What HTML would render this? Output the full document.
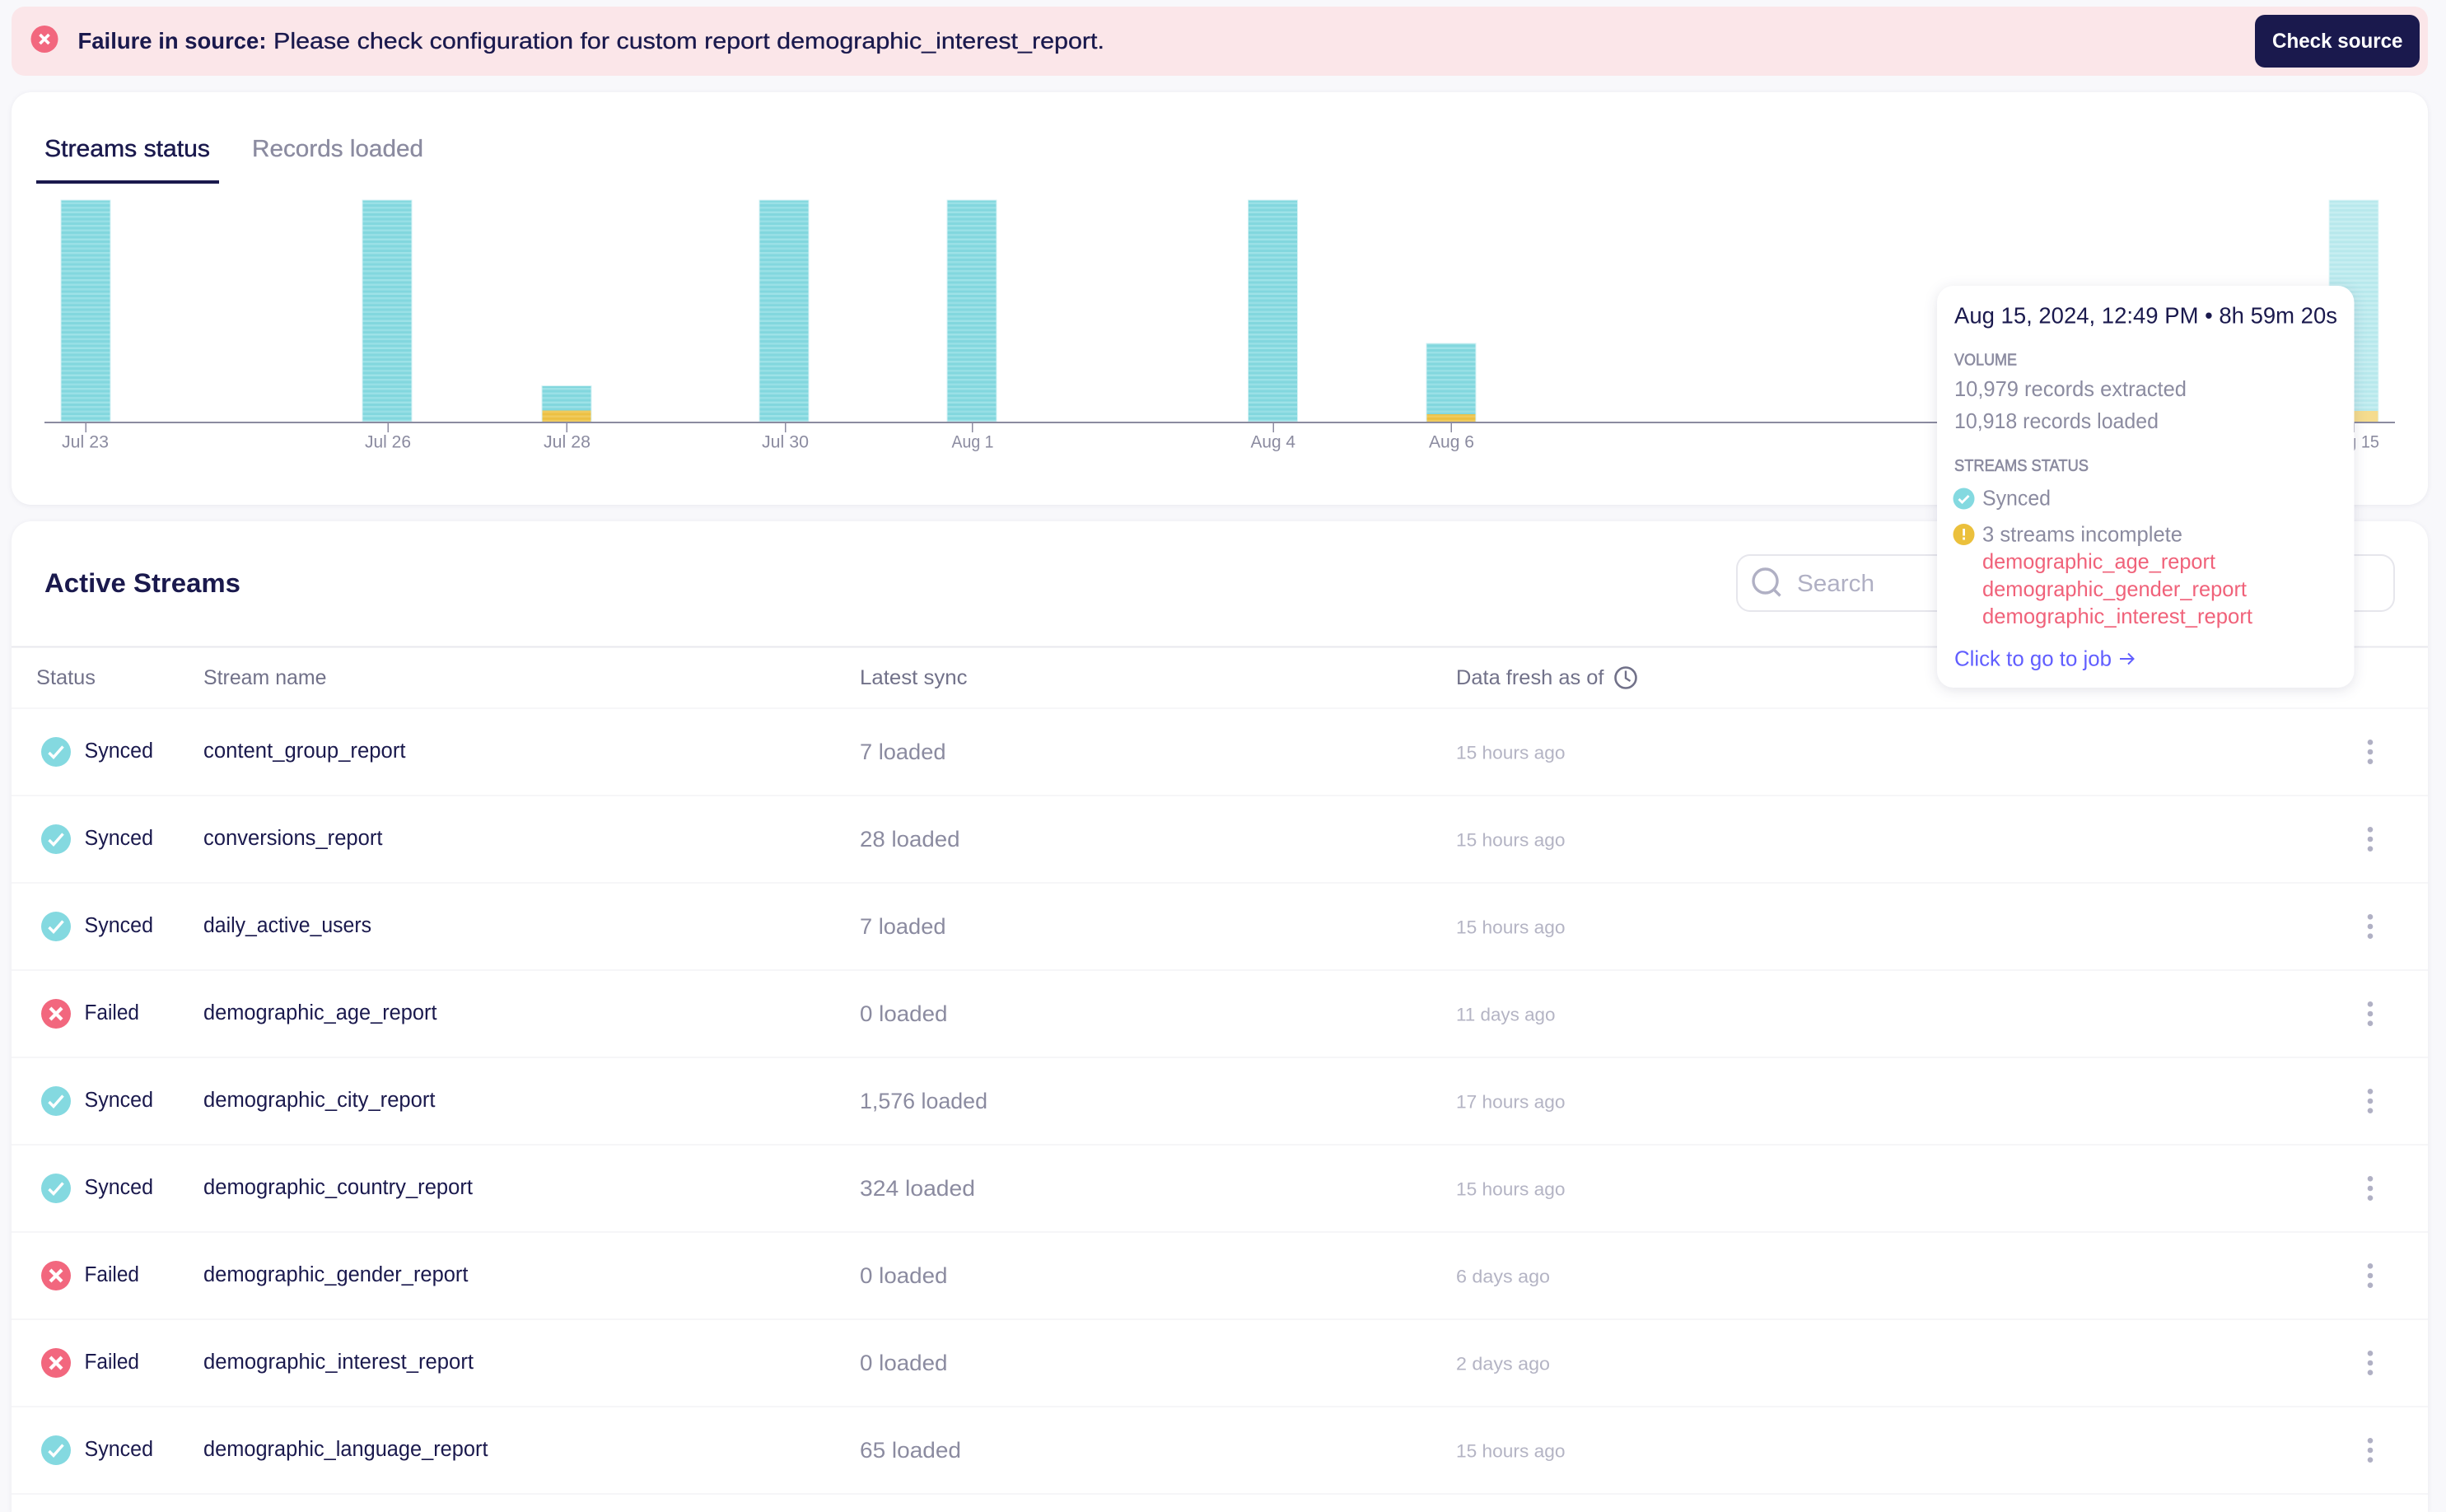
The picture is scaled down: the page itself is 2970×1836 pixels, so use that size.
<!DOCTYPE html>
<html lang="en"><head><meta charset="utf-8"><title>Streams status</title>
<style>
html,body{margin:0;padding:0;background:#f8f8fb;width:2970px;height:1836px;overflow:hidden}
svg{display:block}
text{font-family:"Liberation Sans",sans-serif;white-space:pre}
.n{font-size:25.5px;fill:#1a194d}
.h{font-size:25px;fill:#717189}
.l{font-size:26.5px;fill:#8b8ba0}
.f{font-size:22.5px;fill:#b4b4c4}
.t{font-size:21.5px;fill:#8b8ba0;text-anchor:start}
.tt{font-size:26px;fill:#8b8ba0}
.r{font-size:26px;fill:#f0627a}
.cap{font-size:20px;fill:#8b8ba0;stroke:#8b8ba0;stroke-width:.6}
</style></head><body>
<svg xmlns="http://www.w3.org/2000/svg" width="2970" height="1836" viewBox="0 0 2970 1836">
<defs>
<pattern id="st" width="10" height="16.5" patternUnits="userSpaceOnUse" y="243">
<rect width="10" height="16.5" fill="#82d7de"/><rect y="2.5" width="10" height="2.5" fill="#9ae0e6"/><rect y="8" width="10" height="2.7" fill="#97dfe5"/><rect y="13.5" width="10" height="2.5" fill="#9ee2e7"/></pattern>
<pattern id="sl" width="10" height="5.5" patternUnits="userSpaceOnUse" y="243"><rect width="10" height="5.5" fill="#b7e8ec"/><rect y="2.8" width="10" height="2.7" fill="#c6eef1"/></pattern>
<pattern id="sy" width="10" height="5.5" patternUnits="userSpaceOnUse" y="243"><rect width="10" height="5.5" fill="#ecc043"/><rect y="2.8" width="10" height="2.7" fill="#f0ca5c"/></pattern>
<g id="ok"><circle r="18" fill="#84d9e0"/><path d="M-8.5 1L-3 6.5L8.5-6.5" fill="none" stroke="#fff" stroke-width="3.4"/></g>
<g id="no"><circle r="18" fill="#f2677e"/><path d="M-7-7L7 7M7-7L-7 7" fill="none" stroke="#fff" stroke-width="4.2"/></g>
<g id="dots" fill="#b0b0c4"><circle cy="-11.7" r="3.3"/><circle r="3.3"/><circle cy="11.7" r="3.3"/></g>
</defs>
<rect width="2970" height="1836" fill="#f8f8fb"/>

<!-- banner -->
<rect x="14" y="8" width="2934" height="84" rx="16" fill="#fbe6e9"/>
<circle cx="54" cy="47.5" r="16.5" fill="#f2677e"/>
<path d="M48.5 42L59.5 53M59.5 42L48.5 53" stroke="#fff" stroke-width="3.6" fill="none"/>
<text x="94.5" y="59" font-size="28" font-weight="700" fill="#1a194d" textLength="229" lengthAdjust="spacingAndGlyphs">Failure in source:</text>
<text x="332" y="59" font-size="28" fill="#1a194d" stroke="#1a194d" stroke-width=".3" textLength="1009" lengthAdjust="spacingAndGlyphs">Please check configuration for custom report demographic_interest_report.</text>
<rect x="2738" y="18" width="200" height="64" rx="12" fill="#1a194d"/>
<text x="2759" y="58" font-size="25" font-weight="700" fill="#fff" textLength="158.5" lengthAdjust="spacingAndGlyphs">Check source</text>

<!-- card 1 -->
<g style="filter:drop-shadow(0 1px 3px rgba(26,25,77,.07))"><rect x="14" y="112" width="2934" height="501" rx="24" fill="#fff"/></g>
<text x="54" y="190" font-size="28.5" fill="#1a194d" stroke="#1a194d" stroke-width=".45" textLength="201" lengthAdjust="spacingAndGlyphs">Streams status</text>
<text x="306" y="190" font-size="28.5" fill="#8b8ba0" stroke="#8b8ba0" stroke-width=".3" textLength="208" lengthAdjust="spacingAndGlyphs">Records loaded</text>
<rect x="44" y="219" width="222" height="4" fill="#1a194d"/>

<!-- bars -->
<g stroke="#d5f2f4" stroke-width="1">
<rect x="74" y="243" width="60" height="269" fill="url(#st)"/>
<rect x="440" y="243" width="60" height="269" fill="url(#st)"/>
<rect x="658" y="468.5" width="60" height="43.5" fill="url(#st)"/>
<rect x="922" y="243" width="60" height="269" fill="url(#st)"/>
<rect x="1150" y="243" width="60" height="269" fill="url(#st)"/>
<rect x="1515.5" y="243" width="60" height="269" fill="url(#st)"/>
<rect x="1732" y="417" width="60" height="95" fill="url(#st)"/>
<rect x="2828" y="243" width="60" height="269" fill="url(#sl)" stroke="#e4f7f8"/>
</g>
<rect x="658.5" y="498.5" width="59" height="13.5" fill="url(#sy)"/>
<rect x="1732.5" y="503" width="59" height="9" fill="url(#sy)"/>
<rect x="2828.5" y="499" width="59" height="13" fill="#f5dc8e"/>
<rect x="54" y="512" width="2854" height="2" fill="#8b8ba0"/>
<g fill="#8b8ba0">
<rect x="103.5" y="513" width="1.5" height="12"/><rect x="470.5" y="513" width="1.5" height="12"/><rect x="687.5" y="513" width="1.5" height="12"/><rect x="953" y="513" width="1.5" height="12"/><rect x="1180" y="513" width="1.5" height="12"/><rect x="1545.5" y="513" width="1.5" height="12"/><rect x="1761.5" y="513" width="1.5" height="12"/><rect x="2857.5" y="513" width="1.5" height="12"/>
</g>
<g>
<text class="t" x="75" y="543.5" textLength="57" lengthAdjust="spacingAndGlyphs">Jul 23</text>
<text class="t" x="443" y="543.5" textLength="56" lengthAdjust="spacingAndGlyphs">Jul 26</text>
<text class="t" x="660" y="543.5" textLength="57" lengthAdjust="spacingAndGlyphs">Jul 28</text>
<text class="t" x="925" y="543.5" textLength="57" lengthAdjust="spacingAndGlyphs">Jul 30</text>
<text class="t" x="1155.5" y="543.5" textLength="51" lengthAdjust="spacingAndGlyphs">Aug 1</text>
<text class="t" x="1518.5" y="543.5" textLength="54.5" lengthAdjust="spacingAndGlyphs">Aug 4</text>
<text class="t" x="1735" y="543.5" textLength="55" lengthAdjust="spacingAndGlyphs">Aug 6</text>
<text class="t" x="2826" y="543.5" textLength="63" lengthAdjust="spacingAndGlyphs">Aug 15</text>
</g>

<!-- card 2 -->
<g style="filter:drop-shadow(0 1px 3px rgba(26,25,77,.07))"><path d="M14 1836V657a24 24 0 0 1 24-24H2924a24 24 0 0 1 24 24V1836Z" fill="#fff"/></g>
<text x="54" y="719" font-size="32.5" font-weight="700" fill="#1a194d" textLength="238" lengthAdjust="spacingAndGlyphs">Active Streams</text>
<rect x="2109" y="674" width="798" height="68" rx="16" fill="#fff" stroke="#e6e6ec" stroke-width="2"/>
<circle cx="2143.5" cy="705.5" r="14.5" fill="none" stroke="#b0b0c4" stroke-width="3.4"/>
<path d="M2154 716L2161.5 723.5" stroke="#b0b0c4" stroke-width="3.4" fill="none"/>
<text x="2182" y="718" font-size="28.5" fill="#b0b0c4" textLength="94" lengthAdjust="spacingAndGlyphs">Search</text>
<rect x="14" y="784.5" width="2934" height="2" fill="#e8e8ee"/>
<text class="h" x="44" y="831" textLength="72" lengthAdjust="spacingAndGlyphs">Status</text>
<text class="h" x="247" y="831" textLength="149.5" lengthAdjust="spacingAndGlyphs">Stream name</text>
<text class="h" x="1044" y="831" textLength="130.5" lengthAdjust="spacingAndGlyphs">Latest sync</text>
<text class="h" x="1768" y="831" textLength="179.5" lengthAdjust="spacingAndGlyphs">Data fresh as of</text>
<circle cx="1974" cy="823" r="12.5" fill="none" stroke="#717189" stroke-width="2.6"/>
<path d="M1974 814.5V823.5L1979.5 827" fill="none" stroke="#717189" stroke-width="2.4"/>
<g fill="#f6f6f8">
<rect x="14" y="859" width="2934" height="2"/><rect x="14" y="965" width="2934" height="2"/><rect x="14" y="1071" width="2934" height="2"/><rect x="14" y="1177" width="2934" height="2"/><rect x="14" y="1283" width="2934" height="2"/><rect x="14" y="1389" width="2934" height="2"/><rect x="14" y="1495" width="2934" height="2"/><rect x="14" y="1601" width="2934" height="2"/><rect x="14" y="1707" width="2934" height="2"/><rect x="14" y="1813" width="2934" height="2"/>
</g>

<!-- rows -->
<use href="#ok" x="68" y="913"/><text class="n" x="102.5" y="920" textLength="83.5" lengthAdjust="spacingAndGlyphs">Synced</text><text class="n" x="247" y="920" textLength="245.5" lengthAdjust="spacingAndGlyphs">content_group_report</text><text class="l" x="1044" y="922" textLength="104.5" lengthAdjust="spacingAndGlyphs">7 loaded</text><text class="f" x="1768" y="921.5" textLength="132.5" lengthAdjust="spacingAndGlyphs">15 hours ago</text><use href="#dots" x="2878" y="913"/>

<use href="#ok" x="68" y="1019"/><text class="n" x="102.5" y="1026" textLength="83.5" lengthAdjust="spacingAndGlyphs">Synced</text><text class="n" x="247" y="1026" textLength="217.5" lengthAdjust="spacingAndGlyphs">conversions_report</text><text class="l" x="1044" y="1028" textLength="121.5" lengthAdjust="spacingAndGlyphs">28 loaded</text><text class="f" x="1768" y="1027.5" textLength="132.5" lengthAdjust="spacingAndGlyphs">15 hours ago</text><use href="#dots" x="2878" y="1019"/>

<use href="#ok" x="68" y="1125"/><text class="n" x="102.5" y="1132" textLength="83.5" lengthAdjust="spacingAndGlyphs">Synced</text><text class="n" x="247" y="1132" textLength="204" lengthAdjust="spacingAndGlyphs">daily_active_users</text><text class="l" x="1044" y="1134" textLength="104.5" lengthAdjust="spacingAndGlyphs">7 loaded</text><text class="f" x="1768" y="1133.5" textLength="132.5" lengthAdjust="spacingAndGlyphs">15 hours ago</text><use href="#dots" x="2878" y="1125"/>

<use href="#no" x="68" y="1231"/><text class="n" x="102.5" y="1238" textLength="66.5" lengthAdjust="spacingAndGlyphs">Failed</text><text class="n" x="247" y="1238" textLength="283.5" lengthAdjust="spacingAndGlyphs">demographic_age_report</text><text class="l" x="1044" y="1240" textLength="106.5" lengthAdjust="spacingAndGlyphs">0 loaded</text><text class="f" x="1768" y="1239.5" textLength="120.5" lengthAdjust="spacingAndGlyphs">11 days ago</text><use href="#dots" x="2878" y="1231"/>

<use href="#ok" x="68" y="1337"/><text class="n" x="102.5" y="1344" textLength="83.5" lengthAdjust="spacingAndGlyphs">Synced</text><text class="n" x="247" y="1344" textLength="281.5" lengthAdjust="spacingAndGlyphs">demographic_city_report</text><text class="l" x="1044" y="1346" textLength="155" lengthAdjust="spacingAndGlyphs">1,576 loaded</text><text class="f" x="1768" y="1345.5" textLength="132.5" lengthAdjust="spacingAndGlyphs">17 hours ago</text><use href="#dots" x="2878" y="1337"/>

<use href="#ok" x="68" y="1443"/><text class="n" x="102.5" y="1450" textLength="83.5" lengthAdjust="spacingAndGlyphs">Synced</text><text class="n" x="247" y="1450" textLength="327" lengthAdjust="spacingAndGlyphs">demographic_country_report</text><text class="l" x="1044" y="1452" textLength="140" lengthAdjust="spacingAndGlyphs">324 loaded</text><text class="f" x="1768" y="1451.5" textLength="132.5" lengthAdjust="spacingAndGlyphs">15 hours ago</text><use href="#dots" x="2878" y="1443"/>

<use href="#no" x="68" y="1549"/><text class="n" x="102.5" y="1556" textLength="66.5" lengthAdjust="spacingAndGlyphs">Failed</text><text class="n" x="247" y="1556" textLength="321.5" lengthAdjust="spacingAndGlyphs">demographic_gender_report</text><text class="l" x="1044" y="1558" textLength="106.5" lengthAdjust="spacingAndGlyphs">0 loaded</text><text class="f" x="1768" y="1557.5" textLength="114" lengthAdjust="spacingAndGlyphs">6 days ago</text><use href="#dots" x="2878" y="1549"/>

<use href="#no" x="68" y="1655"/><text class="n" x="102.5" y="1662" textLength="66.5" lengthAdjust="spacingAndGlyphs">Failed</text><text class="n" x="247" y="1662" textLength="328" lengthAdjust="spacingAndGlyphs">demographic_interest_report</text><text class="l" x="1044" y="1664" textLength="106.5" lengthAdjust="spacingAndGlyphs">0 loaded</text><text class="f" x="1768" y="1663.5" textLength="114" lengthAdjust="spacingAndGlyphs">2 days ago</text><use href="#dots" x="2878" y="1655"/>

<use href="#ok" x="68" y="1761"/><text class="n" x="102.5" y="1768" textLength="83.5" lengthAdjust="spacingAndGlyphs">Synced</text><text class="n" x="247" y="1768" textLength="345.5" lengthAdjust="spacingAndGlyphs">demographic_language_report</text><text class="l" x="1044" y="1770" textLength="123" lengthAdjust="spacingAndGlyphs">65 loaded</text><text class="f" x="1768" y="1769.5" textLength="132.5" lengthAdjust="spacingAndGlyphs">15 hours ago</text><use href="#dots" x="2878" y="1761"/>

<!-- tooltip -->
<g style="filter:drop-shadow(0 3px 8px rgba(26,25,77,.12))"><rect x="2352" y="347" width="506.5" height="488" rx="20" fill="#fff"/></g>
<text x="2373" y="392.5" font-size="28" fill="#1a194d" textLength="465" lengthAdjust="spacingAndGlyphs">Aug 15, 2024, 12:49 PM • 8h 59m 20s</text>
<text class="cap" x="2373" y="443.5" textLength="76" lengthAdjust="spacingAndGlyphs">VOLUME</text>
<text class="tt" x="2373" y="481" textLength="282" lengthAdjust="spacingAndGlyphs">10,979 records extracted</text>
<text class="tt" x="2373" y="520" textLength="248" lengthAdjust="spacingAndGlyphs">10,918 records loaded</text>
<text class="cap" x="2373" y="572" textLength="163" lengthAdjust="spacingAndGlyphs">STREAMS STATUS</text>
<circle cx="2384.5" cy="605.5" r="13" fill="#84d9e0"/>
<path d="M2378.5 606L2382.5 610L2390.5 602" fill="none" stroke="#fff" stroke-width="2.8"/>
<text class="tt" x="2407" y="613.5" textLength="83" lengthAdjust="spacingAndGlyphs">Synced</text>
<circle cx="2384.5" cy="649" r="13" fill="#ebc03c"/>
<rect x="2383.2" y="642" width="2.8" height="8.5" fill="#fff"/><rect x="2383.2" y="652.5" width="2.8" height="3" fill="#fff"/>
<text class="tt" x="2407" y="657.5" textLength="243" lengthAdjust="spacingAndGlyphs">3 streams incomplete</text>
<text class="r" x="2407" y="690.5" textLength="283" lengthAdjust="spacingAndGlyphs">demographic_age_report</text>
<text class="r" x="2407" y="724" textLength="321" lengthAdjust="spacingAndGlyphs">demographic_gender_report</text>
<text class="r" x="2407" y="757" textLength="328" lengthAdjust="spacingAndGlyphs">demographic_interest_report</text>
<text x="2373" y="808.5" font-size="26" fill="#615eff" textLength="191" lengthAdjust="spacingAndGlyphs">Click to go to job</text>
<path d="M2574 800H2590.5M2584 793.5L2590.5 800L2584 806.5" fill="none" stroke="#615eff" stroke-width="2"/>
</svg>
</body></html>
